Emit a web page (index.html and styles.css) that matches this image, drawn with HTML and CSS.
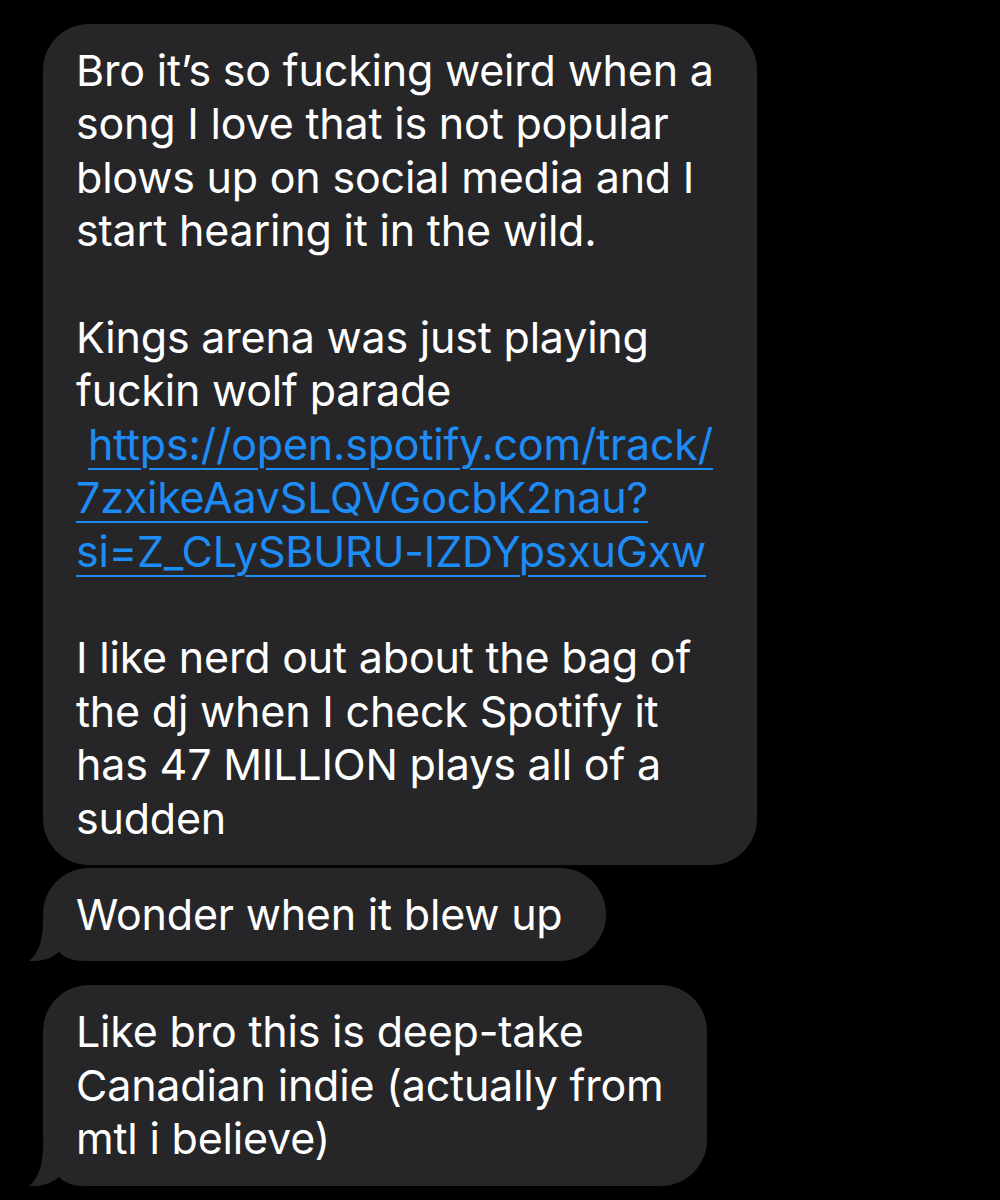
FILE: index.html
```html
<!DOCTYPE html>
<html lang="en">
<head>
  <meta charset="UTF-8" />
  <meta name="viewport" content="width=device-width, initial-scale=1.0"/>
  <title>Messages</title>
  <link rel="stylesheet" href="styles.css">
</head>
<body>

<div class="thread">
  <div class="bubble">
    <p>Bro it’s so fucking weird when a<br>song I love that is not popular<br>blows up on social media and I<br>start hearing it in the wild.</p>
    <p>Kings arena was just playing<br>fuckin wolf parade<br>&nbsp;<a href="#">https://open.spotify.com/track/<br>7zxikeAavSLQVGocbK2nau?<br>si=Z_CLySBURU-IZDYpsxuGxw</a></p>
    <p>I like nerd out about the bag of<br>the dj when I check Spotify it<br>has 47 MILLION plays all of a<br>sudden</p>
  </div>

  <div class="bubble">
    <svg class="tail" viewBox="0 0 56 40" width="56" height="40"><path d="M14,0 C14,18 10,32 0,40 C10,41 22,38 30,31 C36,37 44,40 56,40 L56,0 Z"/></svg>
    <p>Wonder when it blew up</p>
  </div>

  <div class="bubble new-group">
    <svg class="tail" viewBox="0 0 56 40" width="56" height="40"><path d="M14,0 C14,18 10,32 0,40 C10,41 22,38 30,31 C36,37 44,40 56,40 L56,0 Z"/></svg>
    <p>Like bro this is deep-take<br>Canadian indie (actually from<br>mtl i believe)</p>
  </div>
</div>

</body>
</html>
```

FILE: styles.css
```css
body {
  margin: 0;
  background: #000;
  font-family: Inter, 'Noto Sans', sans-serif;
}

.thread {
  display: flex;
  flex-direction: column;
  align-items: flex-start;
  gap: 3px;
  padding: 24px 0 0 43px;
}

.bubble {
  position: relative;
  background: #262628;
  color: #fff;
  padding: 20px 43px 20px 33px;
  border-radius: 46px;
  font-size: 43px;
  letter-spacing: -0.2px;
  line-height: 53.4px;
  white-space: nowrap;
}

.bubble p {
  position: relative;
  margin: 0 0 53.4px;
}

.bubble p:last-of-type {
  margin-bottom: 0;
}

.bubble a {
  color: #1e8cf6;
  text-decoration: underline;
  text-decoration-thickness: 2px;
  text-underline-offset: 8px;
}

.new-group {
  margin-top: 21px;
}

.tail {
  position: absolute;
  left: -14px;
  bottom: 0;
  fill: #262628;
}
```
